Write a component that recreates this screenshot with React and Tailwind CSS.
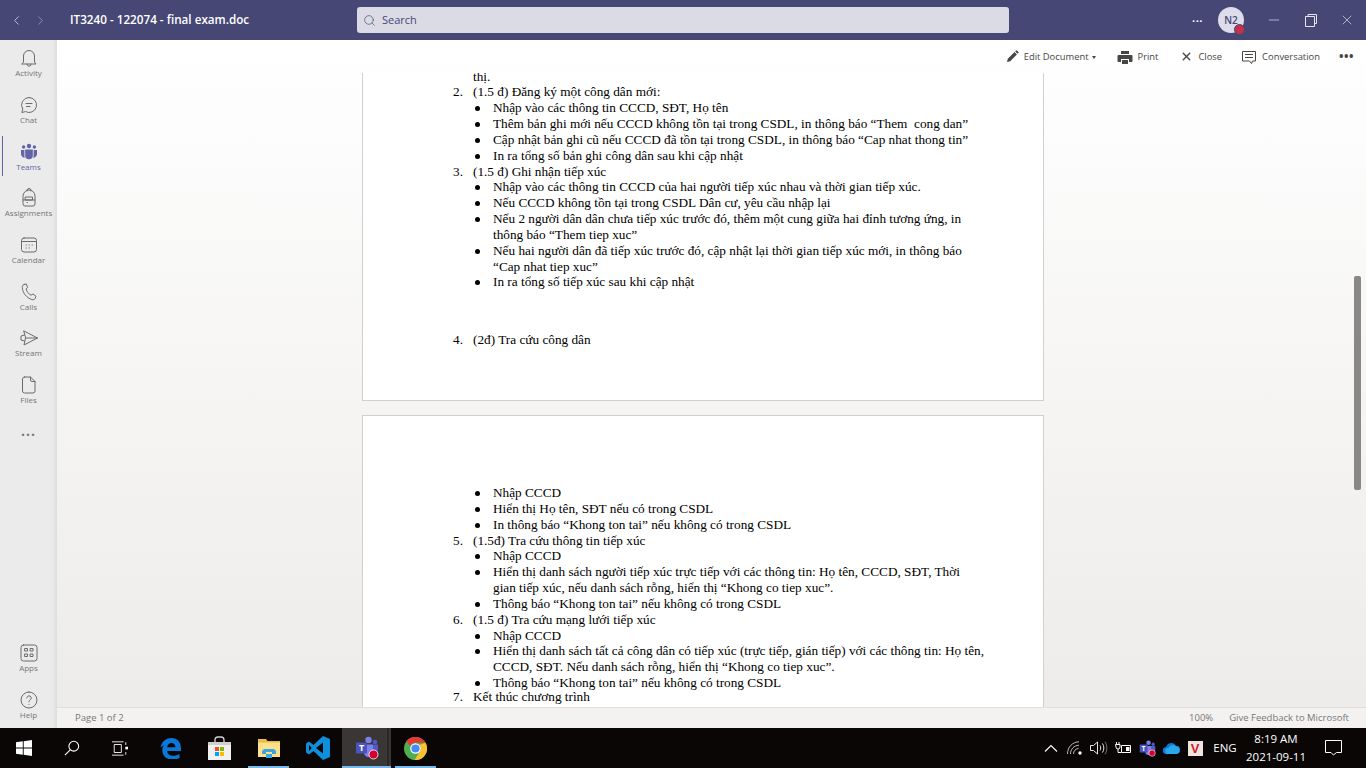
import { Fragment } from "react";
import { ChevronLeft, ChevronRight, Search, Minus, X } from "lucide-react";

const Line = ({ d, size = 20, sw = 1, color = "#6b6b6b", fill = "none", box = 20 }) => (
  <svg width={size} height={size} viewBox={`0 0 ${box} ${box}`} fill={fill} stroke={color} strokeWidth={sw} strokeLinejoin="round" strokeLinecap="round">
    <path d={d} />
  </svg>
);

const TeamsRailIcon = () => (
  <svg width="20" height="20" viewBox="0 0 20 20" fill="#6264a7">
    <circle cx="10" cy="4" r="2.2" />
    <circle cx="4.6" cy="5" r="1.7" />
    <circle cx="15.4" cy="5" r="1.7" />
    <path d="M6.2 7.5h7.6v6a3.8 3.8 0 0 1-7.6 0z" />
    <path d="M2 8h3.4v5.5c0 .9.2 1.7.5 2.3C3.700 15.700 2 14 2 12z" />
    <path d="M18 8h-3.400v5.500c0 .9-.2 1.700-.5 2.300 2.200-.1 3.900-1.800 3.900-3.800z" />
  </svg>
);

const railTop = [
  { label: "Activity", d: "M4.500 14V8a5.500 5.500 0 0 1 11 0v6l1.500 2H3z M8 16.200a2 2 0 0 0 4 0" },
  { label: "Chat", d: "M10 2.500a7.500 7.500 0 1 1-3.500 14.100L2.800 17.500l1-3.400A7.500 7.500 0 0 1 10 2.500z M7 8.500h6 M7.500 11.500h3.500" },
  { label: "Teams", active: true },
  { label: "Assignments", d: "M4 8a6 6 0 0 1 12 0v8a2 2 0 0 1-2 2H6a2 2 0 0 1-2-2z M8 3V2.500a2 2 0 0 1 4 0V3 M6.500 9h7v3h-7z M4 12h12 M8 14.500h.5" },
  { label: "Calendar", d: "M5 3h10a2.500 2.500 0 0 1 2.500 2.500v9A2.500 2.500 0 0 1 15 17H5a2.500 2.500 0 0 1-2.500-2.500v-9A2.500 2.500 0 0 1 5 3z M2.500 6.500h15 M7 10h.4 M10 10h.4 M13 10h.4 M7 13h.4 M10 13h.4" },
  { label: "Calls", d: "M5 2.500l2.300-.5 1.300 3.500-1.500 1.500c.5 2.500 2.500 5 4.900 6.200l2-1.200 3 2.300-.8 2c-.5 1.200-2 1.700-3.300 1.300C7.500 15.800 3.600 10.800 3.300 5.500 3.200 4 3.900 2.900 5 2.500z" },
  { label: "Stream", d: "M5 3l13.500 7L5 17l1.500-7z M6.500 10h12 M5.500 7L2 8v4l3.500 1" },
  { label: "Files", d: "M5.500 2h6l4.500 4.500V16a2 2 0 0 1-2 2H5.500a2 2 0 0 1-2-2V4a2 2 0 0 1 2-2z M11.500 2v3a1.500 1.500 0 0 0 1.500 1.500h3" },
];

const RailItem = ({ label, d, active }) => (
  <div className="relative flex h-[46.7px] flex-col items-center justify-center">
    {active && <div className="absolute left-[2px] top-[3px] h-10 w-px bg-[#6264a7]" />}
    {active ? <TeamsRailIcon /> : <Line d={d} />}
    <span className={`text-[8px] leading-[10px] ${active ? "text-[#6264a7]" : "text-[#757575]"}`}>{label}</span>
  </div>
);

const Rail = () => (
  <aside className="flex w-[57px] shrink-0 flex-col bg-[#ebebeb] shadow-[inset_-6px_0_6px_-6px_rgba(0,0,0,0.12)]">
    {railTop.map((item) => <RailItem key={item.label} {...item} />)}
    <div className="mt-[10px] text-center text-[14px] font-bold leading-[14px] tracking-[1px] text-[#777]">...</div>
    <div className="mt-auto">
      <RailItem label="Apps" d="M4.500 2h11A2.500 2.500 0 0 1 18 4.500v11a2.500 2.500 0 0 1-2.500 2.500h-11A2.500 2.500 0 0 1 2 15.500v-11A2.500 2.500 0 0 1 4.500 2z M6 5.500h2.500V8H6z M11.500 5.500H14V8h-2.500z M6 11h2.500v2.500H6z M11.500 11H14v2.500h-2.500z" />
      <RailItem label="Help" d="M10 2a8 8 0 1 1 0 16 8 8 0 0 1 0-16z M7.800 8a2.200 2.200 0 1 1 3.500 1.800c-.9.6-1.300 1-1.300 2 M10 14.300v.2" />
    </div>
  </aside>
);

const Num = ({ n, className = "", children }) => (
  <li className={`flex ${className}`}>
    <span className="w-5 shrink-0">{n}.</span>
    <span className="whitespace-pre">{children}</span>
  </li>
);

const Dot = ({ children }) => (
  <li className="flex pl-5">
    <span className="ml-[2px] mr-[13px] mt-[6px] h-[5px] w-[5px] shrink-0 rounded-full bg-black" />
    <span className="whitespace-pre">{children}</span>
  </li>
);

const Br = ({ a, b }) => <Fragment>{a}<br />{b}</Fragment>;

const Doc = () => (
  <div className="flex min-h-0 flex-1 flex-col overflow-hidden pl-[305px] font-['Liberation_Serif',serif] text-[13.25px] leading-[15.85px] text-black">
    <section className="h-[328px] w-[682px] shrink-0 overflow-hidden border-x border-b border-[#d2d0ce] bg-white pl-[90px]">
      <ul className="-mt-[4.5px]">
        <li className="pl-5">thị.</li>
        <Num n="2">(1.5 đ) Đăng ký một công dân mới:</Num>
        <Dot>Nhập vào các thông tin CCCD, SĐT, Họ tên</Dot>
        <Dot>Thêm bản ghi mới nếu CCCD không tồn tại trong CSDL, in thông báo “Them  cong dan”</Dot>
        <Dot>Cập nhật bản ghi cũ nếu CCCD đã tồn tại trong CSDL, in thông báo “Cap nhat thong tin”</Dot>
        <Dot>In ra tổng số bản ghi công dân sau khi cập nhật</Dot>
        <Num n="3">(1.5 đ) Ghi nhận tiếp xúc</Num>
        <Dot>Nhập vào các thông tin CCCD của hai người tiếp xúc nhau và thời gian tiếp xúc.</Dot>
        <Dot>Nếu CCCD không tồn tại trong CSDL Dân cư, yêu cầu nhập lại</Dot>
        <Dot><Br a="Nếu 2 người dân dân chưa tiếp xúc trước đó, thêm một cung giữa hai đỉnh tương ứng, in" b="thông báo “Them tiep xuc”" /></Dot>
        <Dot><Br a="Nếu hai người dân đã tiếp xúc trước đó, cập nhật lại thời gian tiếp xúc mới, in thông báo" b="“Cap nhat tiep xuc”" /></Dot>
        <Dot>In ra tổng số tiếp xúc sau khi cập nhật</Dot>
        <div className="h-[42px]" />
        <Num n="4">(2đ) Tra cứu công dân</Num>
      </ul>
    </section>
    <section className="mt-[14px] w-[682px] flex-1 overflow-hidden border-x border-t border-[#d2d0ce] bg-white pl-[90px] pt-[69px]">
      <ul>
        <Dot>Nhập CCCD</Dot>
        <Dot>Hiển thị Họ tên, SĐT nếu có trong CSDL</Dot>
        <Dot>In thông báo “Khong ton tai” nếu không có trong CSDL</Dot>
        <Num n="5">(1.5đ) Tra cứu thông tin tiếp xúc</Num>
        <Dot>Nhập CCCD</Dot>
        <Dot><Br a="Hiển thị danh sách người tiếp xúc trực tiếp với các thông tin: Họ tên, CCCD, SĐT, Thời" b="gian tiếp xúc, nếu danh sách rỗng, hiển thị “Khong co tiep xuc”." /></Dot>
        <Dot>Thông báo “Khong ton tai” nếu không có trong CSDL</Dot>
        <Num n="6">(1.5 đ) Tra cứu mạng lưới tiếp xúc</Num>
        <Dot>Nhập CCCD</Dot>
        <Dot><Br a="Hiển thị danh sách tất cả công dân có tiếp xúc (trực tiếp, gián tiếp) với các thông tin: Họ tên," b="CCCD, SĐT. Nếu danh sách rỗng, hiển thị “Khong co tiep xuc”." /></Dot>
        <Dot>Thông báo “Khong ton tai” nếu không có trong CSDL</Dot>
        <Num n="7" className="-mt-[2px]">Kết thúc chương trình</Num>
      </ul>
    </section>
  </div>
);

const ToolBtn = ({ icon, label, className = "" }) => (
  <div className={`flex items-center ${className}`}>
    {icon}
    <span className="ml-[5px] text-[9.4px] text-[#484644]">{label}</span>
  </div>
);

const Toolbar = () => (
  <div className="flex h-[33px] shrink-0 items-center justify-end pr-[12px] pt-[1px]">
    <ToolBtn
      label="Edit Document"
      icon={<svg width="13" height="13" viewBox="0 0 13 13" fill="#484644"><path d="M1 12l.8-3.200 6.700-6.700 2.400 2.400-6.700 6.700z M9.200 1.400l.8-.8c.3-.3.8-.3 1.100 0l1.300 1.300c.3.3.3.8 0 1.100l-.8.8z" /></svg>}
    />
    <span className="ml-[3px] mr-[21px] mt-px h-0 w-0 border-x-[2.500px] border-t-[3px] border-x-transparent border-t-[#484644]" />
    <ToolBtn
      label="Print"
      className="mr-[22px]"
      icon={<svg width="16" height="15" viewBox="0 0 16 15" fill="#484644"><path d="M4 1h8v3H4z M1.500 5h13A1 1 0 0 1 15.500 6v5a1 1 0 0 1-1 1H12V9H4v3H1.500a1 1 0 0 1-1-1V6a1 1 0 0 1 1-1z M5 10h6v4H5z" /></svg>}
    />
    <ToolBtn
      label="Close"
      className="mr-[19px]"
      icon={<X size={13} strokeWidth={2.600} color="#484644" />}
    />
    <ToolBtn
      label="Conversation"
      className="mr-[19px]"
      icon={<svg width="16" height="15" viewBox="0 0 16 15" fill="none" stroke="#484644"><path d="M1.500 1.500h13v9.500h-3l-1 2.500-2-2.500h-7z M4 4.500h8 M4 7.500h8" /></svg>}
    />
    <span className="text-[12px] font-bold leading-none tracking-[0.5px] text-[#484644]">•••</span>
  </div>
);

const Header = () => (
  <header className="flex h-10 shrink-0 items-center bg-[#464775] text-white">
    <div className="flex w-[70px] items-center pl-[9px]">
      <ChevronLeft size={15} strokeWidth={1.300} color="#d8d8e6" />
      <ChevronRight size={15} strokeWidth={1.300} color="#9a9abb" className="ml-[9px]" />
    </div>
    <div className="w-[287px] text-[11.7px] font-semibold">IT3240 - 122074 - final exam.doc</div>
    <div className="flex h-[26px] w-[652px] items-center rounded-[3px] bg-[#dbdbe5] pl-[6px] text-[11px] text-[#464775]">
      <Search size={13} strokeWidth={1.400} color="#585a7a" />
      <span className="ml-[6px]">Search</span>
    </div>
    <span className="ml-[183px] text-[11px] font-bold leading-none tracking-[0.5px]">···</span>
    <div className="relative ml-[15px] flex h-[26px] w-[26px] items-center justify-center rounded-full bg-[#dcdcea] text-[10px] font-semibold text-[#464775]">
      N2
      <span className="absolute -bottom-[2px] -right-[1px] box-content h-[9px] w-[9px] rounded-full border border-[#464775] bg-[#c4314b]" />
    </div>
    <Minus size={16} strokeWidth={1} className="ml-[22px]" color="#e6e6f0" />
    <svg width="12" height="13" viewBox="0 0 12 13" fill="none" stroke="#e6e6f0" className="ml-[23px]"><path d="M3 2.500V.5h8.500v9H9.500 M.5 2.500h9v10h-9z" /></svg>
    <X size={16} strokeWidth={1} className="ml-[22px]" color="#e6e6f0" />
  </header>
);

const Tile = ({ children, lit, active }) => (
  <div className={`relative flex h-10 w-[49px] items-center justify-center ${active ? "bg-[#3a3636]" : ""}`}>
    {children}
    {lit && <span className={`absolute bottom-0 h-[2px] bg-[#76b9ed] ${active ? "inset-x-0" : "inset-x-[4px]"}`} />}
  </div>
);

const TeamsLogo = ({ size = 24 }) => (
  <svg width={size} height={size} viewBox="0 0 24 24">
    <circle cx="13.500" cy="4" r="3.200" fill="#7b83eb" />
    <circle cx="20" cy="6" r="2.300" fill="#5059c9" />
    <path d="M9 8.500h9v8a4.500 4.500 0 0 1-9 0z" fill="#7b83eb" />
    <path d="M18 8.500h5v6.500a3 3 0 0 1-5 2z" fill="#5059c9" />
    <rect x="1" y="6.500" width="11" height="11" rx="1" fill="#4b53bc" />
    <text x="6.500" y="15.300" textAnchor="middle" fill="#fff" fontSize="9" fontWeight="700" fontFamily="Open Sans">T</text>
    <circle cx="18.500" cy="18.500" r="4.500" fill="#d6002f" stroke="#fff" strokeWidth="0.800" />
  </svg>
);

const Taskbar = () => (
  <footer className="flex h-10 shrink-0 items-center bg-[#0a0606] text-white">
    <div className="flex h-10 w-12 items-center justify-center">
      <svg width="16" height="16" viewBox="0 0 16 16" fill="#fff"><path d="M0 2.300 6.800 1.300v6.200H0z M7.700 1.200 16 0v7.500H7.700z M0 8.400h6.800v6.300L0 13.700z M7.700 8.400H16V16l-8.300-1.200z" /></svg>
    </div>
    <div className="flex h-10 w-12 items-center justify-center">
      <svg width="16" height="16" viewBox="0 0 18 18" fill="none" stroke="#fff" strokeWidth="1.200"><circle cx="11" cy="7" r="5.500" /><path d="M7 11 1 17" /></svg>
    </div>
    <div className="mr-[2px] flex h-10 w-12 items-center justify-center">
      <svg width="16" height="15" viewBox="0 0 18 16" fill="none" stroke="#fff"><path d="M0 .5h13 M0 15.500h13 M2.500 3.500h8v9h-8z M15.500 1v3 M15.500 12v3" /><rect x="15" y="6" width="3" height="3" fill="#fff" stroke="none" /></svg>
    </div>
    <Tile>
      <svg width="21" height="21" viewBox="0 0 21 21" fill="#0a78d7"><path d="M.5 9.500C1.500 4 5.500 0 11.500 0c5.500 0 9.500 4 9.500 10.500v2.500H7c.3 3 2.600 4.800 6 4.800 2.700 0 4.700-.7 6.500-1.800v4c-2 1-4.300 1.500-7 1.500-6.500 0-10.200-4-10.200-9.200 0-2.300.5-4 1.700-5.600-1 .9-2 1.800-3.500 2.800z M7.100 9.300h8.300c0-2.500-1.500-4.200-4-4.200-2.300 0-3.900 1.700-4.300 4.200z" fillRule="evenodd" /></svg>
    </Tile>
    <Tile>
      <svg width="23" height="24" viewBox="0 0 23 24"><path d="M7 6V4a3 3 0 0 1 3-3h3a3 3 0 0 1 3 3v2" fill="none" stroke="#d4d4d4" strokeWidth="1.300" /><path d="M0 6h23v18H0z" fill="#f0f0f0" /><path d="M0 6h23v3H0z" fill="#cfcfcf" /><rect x="7" y="11" width="4" height="4" fill="#f25022" /><rect x="12" y="11" width="4" height="4" fill="#7fba00" /><rect x="7" y="16" width="4" height="4" fill="#00a4ef" /><rect x="12" y="16" width="4" height="4" fill="#ffb900" /></svg>
    </Tile>
    <Tile lit>
      <svg width="22" height="20" viewBox="0 0 22 20"><path d="M0 1h8l1.500 2H0z" fill="#e8c04f" /><path d="M0 3h22v16H0z" fill="#fce08a" /><path d="M0 3h22v1.500H0z" fill="#e8b93c" /><path d="M4 16v-3l2-2h10l2 2v3h-4v-2H8v2zM8 16h6v4H8z" fill="#3aa5e0" /></svg>
    </Tile>
    <Tile>
      <svg width="24" height="24" viewBox="0 0 24 24"><path d="M17 0 7.500 9 3 5.500 0 7.500v9L3 18.500 7.500 15 17 24l7-3V3z" fill="#0e8fdc" /><path d="M17 6.500v11L10 12z" fill="#0a0606" /><path d="M3 9 5.700 12 3 15z" fill="#0a0606" /></svg>
    </Tile>
    <Tile lit active>
      <TeamsLogo />
      <span className="absolute bottom-0 right-[2px] top-0 w-[2px] bg-[#2a2727]" />
    </Tile>
    <Tile lit>
      <svg width="23" height="23" viewBox="0 0 24 24">
        <circle cx="12" cy="12" r="12" fill="#4caf50" />
        <path d="M12 0a12 12 0 0 1 10.400 6H12a6 6 0 0 0-5.500 3.500L2.500 4.300A12 12 0 0 1 12 0z" fill="#e53935" />
        <path d="M22.400 6A12 12 0 0 1 11 24l5.300-8.500A6 6 0 0 0 16 8z" fill="#fbc02d" />
        <circle cx="12" cy="12" r="5.500" fill="#fff" />
        <circle cx="12" cy="12" r="4.300" fill="#4a8af4" />
      </svg>
    </Tile>
    <div className="ml-auto flex items-center">
      <div className="flex w-6 justify-center">
        <svg width="14" height="8" viewBox="0 0 14 8" fill="none" stroke="#fff" strokeWidth="1.100"><path d="M1 7.500 7 1.500l6 6" /></svg>
      </div>
      <div className="flex w-6 justify-center">
        <svg width="16" height="14" viewBox="0 0 16 14" fill="none" stroke="#bdbdbd"><path d="M.5 13C.5 6 5.500 1 12 .8 M3.500 13c0-5 3.500-8.500 8.500-8.800 M6.500 13c0-3 2-5.300 5-5.500" /><circle cx="13" cy="12" r="1.700" fill="#fff" stroke="none" /></svg>
      </div>
      <div className="flex w-6 justify-center">
        <svg width="18" height="14" viewBox="0 0 18 14" fill="none" stroke="#e8e8e8"><path d="M.5 4.500h3L7.500 1v12l-4-3.500h-3z M10 4.500c1 1.500 1 3.500 0 5 M12.500 2.500c1.800 2.700 1.800 6.300 0 9" /><path d="M15 .8c2.500 3.700 2.500 8.700 0 12.400" stroke="#777" /></svg>
      </div>
      <div className="flex w-6 justify-center">
        <svg width="16" height="12" viewBox="0 0 16 12" fill="none" stroke="#fff"><path d="M6.500 3.500h9v7h-9z" /><path d="M11 5h3.500v4H11z" fill="#fff" stroke="none" /><path d="M1.500 0v2.500 M4 0v2.500 M.5 2.500h4.500V5a2 2 0 0 1-4 0z M3 7v3.500h3" /></svg>
      </div>
      <div className="flex w-6 justify-center"><TeamsLogo size={17} /></div>
      <div className="flex w-6 justify-center">
        <svg width="17" height="11" viewBox="0 0 17 11"><path d="M3.500 11A3.500 3.500 0 0 1 3 4C3.800 1.600 6 0 8.300 0c2 0 3.700 1 4.500 2.800A4 4 0 0 1 13.500 11z" fill="#0f78d4" /><path d="M5 11a3 3 0 0 1 .5-6 4.500 4.500 0 0 1 7.500-1.500 3.800 3.800 0 0 1 .5 7.500z" fill="#28a8ea" /></svg>
      </div>
      <div className="flex w-6 justify-center">
        <div className="flex h-[15px] w-[15px] items-center justify-center bg-[#eee4e0] font-['Liberation_Sans',sans-serif] text-[13px] font-bold leading-none text-[#c8242b]">V</div>
      </div>
      <div className="w-9 text-center text-[11.5px]">ENG</div>
      <div className="w-[66px] text-center text-[11.5px] leading-[18px]">
        <div>8:19 AM</div>
        <div>2021-09-11</div>
      </div>
      <div className="flex w-12 justify-center">
        <svg width="17" height="16" viewBox="0 0 17 16" fill="none" stroke="#fff"><path d="M.5.5h16v12h-5L8.500 15 6 12.500H.5z" /></svg>
      </div>
      <div className="w-[9px]" />
    </div>
  </footer>
);

export default function App() {
  return (
    <div className="flex h-[768px] w-[1366px] flex-col overflow-hidden font-['Open_Sans',sans-serif]">
      <Header />
      <div className="flex min-h-0 flex-1">
        <Rail />
        <main className="relative flex min-w-0 flex-1 flex-col bg-gradient-to-b from-white to-[#edebe9]">
          <Toolbar />
          <Doc />
          <div className="absolute left-[1297px] top-[236px] h-[214px] w-[7px] rounded-[2px] bg-[#8a8886]" />
          <div className="flex h-[21px] shrink-0 items-center justify-between border-t border-[#e1dfdd] bg-[#f3f2f1] pl-[18px] pr-[17px] pt-px text-[9.5px] text-[#797775]">
            <span>Page 1 of 2</span>
            <span>
              100%<span className="ml-[16px]">Give Feedback to Microsoft</span>
            </span>
          </div>
        </main>
      </div>
      <Taskbar />
    </div>
  );
}
